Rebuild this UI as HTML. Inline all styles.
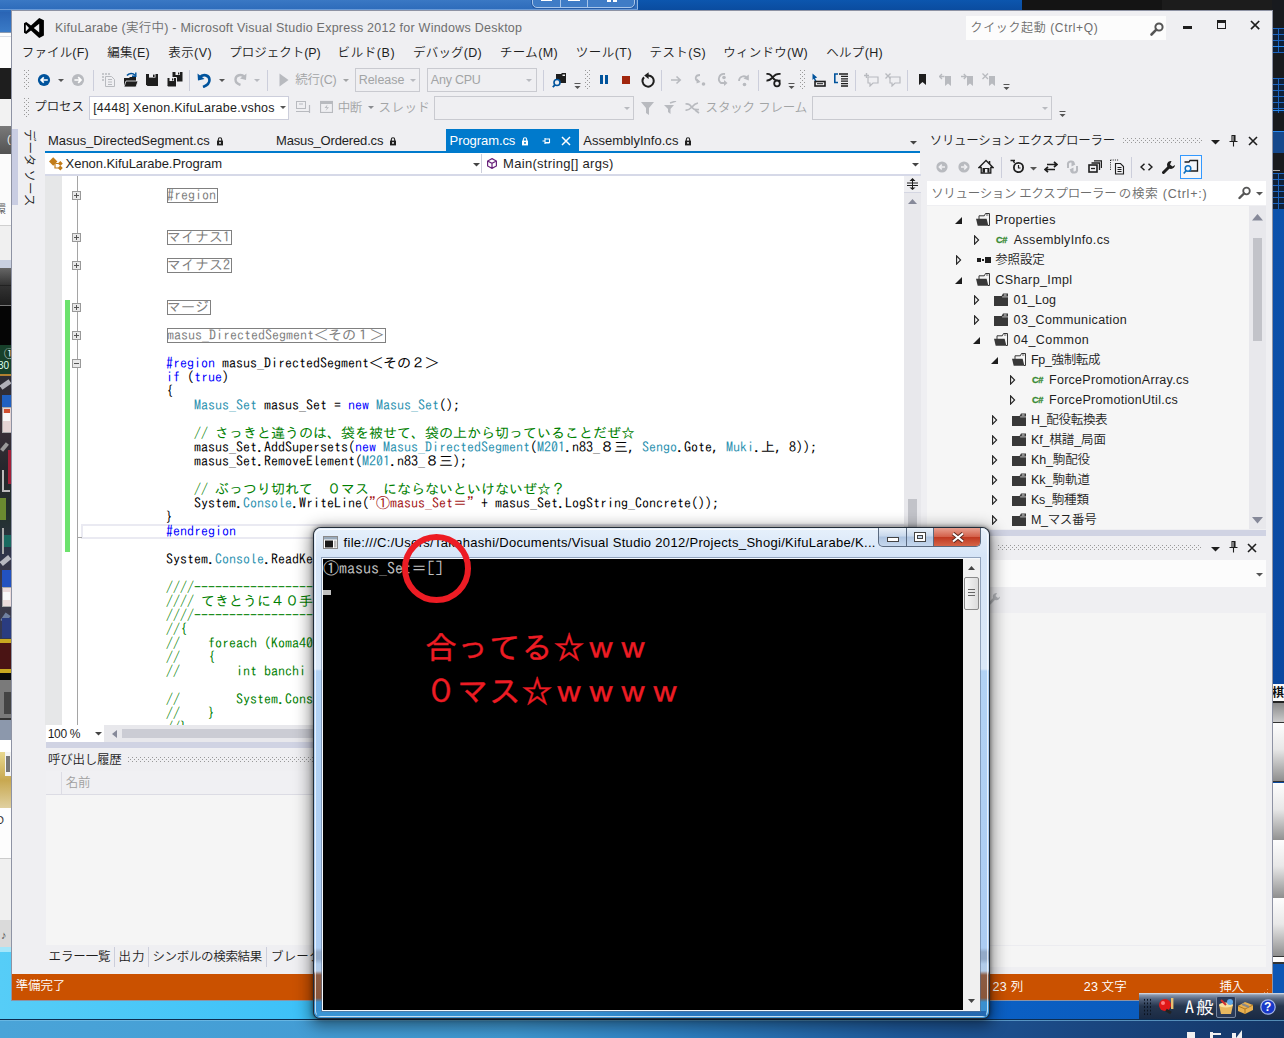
<!DOCTYPE html>
<html lang="ja"><head><meta charset="utf-8"><title>KifuLarabe - Microsoft Visual Studio</title><style>
html,body{margin:0;padding:0}
body{width:1284px;height:1038px;overflow:hidden;position:relative;background:#0a4aa0}
#p{position:absolute;left:0;top:0;width:1284px;height:1038px;overflow:hidden}
#p div,#p span,#p svg{position:absolute;box-sizing:content-box}
#p span{white-space:pre}
.u{font-family:"Liberation Sans","Noto Sans CJK JP",sans-serif;font-weight:350}
.c{font-family:"IPAGothic","Liberation Mono",monospace;font-size:14px;line-height:14px;height:14px;color:#000}
.c i{font-style:normal}
.q{display:inline-block;position:static;width:7px;overflow:hidden;font-weight:normal;vertical-align:top;height:14px}
.k{color:#00f}.t{color:#2b91af}.g{color:#008000}.s{color:#a31515}
</style></head><body><div id="p">
<svg width="0" height="0" style="left:0;top:0"><defs><pattern id="gp" width="4" height="4" patternUnits="userSpaceOnUse"><rect width="1" height="1" fill="#999"/><rect x="2" y="2" width="1" height="1" fill="#999"/></pattern></defs></svg>
<div style="left:0px;top:0px;width:1022px;height:12px;background:linear-gradient(#2c6cbc,#0d4da2);"></div>
<div style="left:0px;top:0px;width:640px;height:12px;background:linear-gradient(#3a78c4,#2a68b8);"></div>
<div style="left:638px;top:0px;width:384px;height:12px;background:linear-gradient(#0c56ae,#0a4a9c);"></div>
<div style="left:1022px;top:0px;width:262px;height:12px;background:#1c1c1c;"></div>
<div style="left:1022px;top:0px;width:140px;height:10px;background:#141414;"></div>
<div style="left:532px;top:-6px;width:101px;height:12px;border:1px solid #a8c6ea;border-radius:0 0 5px 5px;background:#3f7cc6;box-shadow:0 0 0 1px #245aa6"></div>
<div style="left:560px;top:-6px;width:1px;height:13px;background:#a8c6ea;"></div>
<div style="left:587px;top:-6px;width:1px;height:13px;background:#a8c6ea;"></div>
<div style="left:541px;top:0px;width:11px;height:1px;background:#fff;"></div>
<div style="left:568px;top:0px;width:12px;height:1px;background:#fff;"></div>
<div style="left:607px;top:0px;width:4px;height:2px;background:#fff;"></div>
<div style="left:613px;top:0px;width:4px;height:2px;background:#fff;"></div>
<div style="left:637px;top:0px;width:1px;height:10px;background:#8fb4e0;"></div>
<div style="left:0px;top:9px;width:638px;height:1px;background:#6a9ad6;"></div>
<div style="left:0px;top:12px;width:12px;height:21px;background:linear-gradient(#2a64b4,#3b7cc8);"></div>
<div style="left:0px;top:32px;width:12px;height:36px;background:#fdfdfd;"></div>
<div style="left:0px;top:32px;width:12px;height:1px;background:#8a9ab0;"></div>
<div style="left:0px;top:36px;width:12px;height:1px;background:#d8dce4;"></div>
<div style="left:0px;top:68px;width:12px;height:31px;background:#1e1e1e;"></div>
<div style="left:0px;top:99px;width:12px;height:27px;background:#f2f2f2;"></div>
<div style="left:0px;top:126px;width:12px;height:28px;background:linear-gradient(#7a7a7a,#525252);"></div>
<span id="t0" class="u" style="left:7px;top:132px;height:14px;line-height:14px;font-size:11px;color:#eee;">(</span>
<div style="left:0px;top:154px;width:12px;height:72px;background:#fbfbfb;"></div>
<span id="t1" class="u" style="left:-5px;top:202px;height:14px;line-height:14px;font-size:11px;color:#555;">環</span>
<div style="left:0px;top:225px;width:12px;height:1px;background:#d0d0d0;"></div>
<div style="left:0px;top:226px;width:12px;height:34px;background:#f0f0f0;"></div>
<div style="left:0px;top:260px;width:12px;height:8px;background:#c9d0e0;"></div>
<div style="left:0px;top:268px;width:12px;height:38px;background:linear-gradient(#666,#333 45%,#1c1c1c);"></div>
<div style="left:0px;top:285px;width:12px;height:1px;background:#222;"></div>
<div style="left:0px;top:305px;width:12px;height:1px;background:#777;"></div>
<div style="left:0px;top:306px;width:12px;height:39px;background:#050505;"></div>
<div style="left:0px;top:345px;width:12px;height:30px;background:#17402a;"></div>
<span id="t2" class="u" style="left:4px;top:348px;height:12px;line-height:12px;font-size:11px;color:#fff;">①</span>
<span id="t3" class="u" style="left:-2px;top:360px;height:12px;line-height:12px;font-size:10px;color:#dfe;">30</span>
<div style="left:0px;top:374px;width:12px;height:2px;background:#b08030;"></div>
<div style="left:0px;top:376px;width:12px;height:263px;background:linear-gradient(#2c2c34,#3a3038 20%,#26262c 35%,#22302c 52%,#30344a 68%,#403a44 80%,#343850);"></div>
<div style="left:0px;top:382px;width:11px;height:5px;background:#b0b0b8;transform:rotate(-35deg)"></div>
<div style="left:2px;top:395px;width:9px;height:14px;background:#2060c0;"></div>
<div style="left:2px;top:407px;width:9px;height:24px;background:#e4d4d4;border:1px solid #aaa"></div>
<div style="left:3px;top:413px;width:7px;height:8px;background:#f8f8f8;"></div>
<div style="left:4px;top:409px;width:6px;height:4px;background:#d05030;"></div>
<div style="left:8px;top:450px;width:4px;height:34px;background:#a02038;"></div>
<div style="left:0px;top:445px;width:9px;height:4px;background:#999;transform:rotate(-50deg)"></div>
<div style="left:2px;top:470px;width:2px;height:22px;background:#bbb;"></div>
<div style="left:2px;top:490px;width:8px;height:2px;background:#bbb;"></div>
<div style="left:0px;top:498px;width:6px;height:22px;background:#6a8a30;"></div>
<div style="left:3px;top:535px;width:8px;height:12px;background:#1a6a60;"></div>
<div style="left:2px;top:528px;width:2px;height:26px;background:#aaa;"></div>
<div style="left:0px;top:558px;width:11px;height:5px;background:#b8b8c0;transform:rotate(-40deg)"></div>
<div style="left:2px;top:570px;width:9px;height:18px;background:#2252c0;"></div>
<div style="left:2px;top:587px;width:9px;height:18px;background:#ecdcdc;border:1px solid #aaa"></div>
<div style="left:3px;top:592px;width:7px;height:8px;background:#fafafa;"></div>
<div style="left:1px;top:615px;width:9px;height:6px;background:#7080a0;transform:rotate(-55deg)"></div>
<div style="left:2px;top:618px;width:9px;height:20px;background:#2a3c80;"></div>
<div style="left:0px;top:639px;width:12px;height:4px;background:#c8a820;"></div>
<div style="left:0px;top:643px;width:12px;height:26px;background:#4a1414;"></div>
<div style="left:0px;top:669px;width:12px;height:4px;background:#c8a820;"></div>
<div style="left:0px;top:673px;width:12px;height:7px;background:#0a0a0a;"></div>
<div style="left:0px;top:680px;width:12px;height:38px;background:#7a7a7a;"></div>
<div style="left:4px;top:692px;width:8px;height:22px;background:#444;"></div>
<div style="left:0px;top:718px;width:12px;height:2px;background:#333;"></div>
<div style="left:0px;top:720px;width:12px;height:20px;background:#8c98ac;"></div>
<div style="left:0px;top:740px;width:12px;height:12px;background:#fff;"></div>
<div style="left:0px;top:752px;width:12px;height:56px;background:linear-gradient(#e8d890,#c8a850 50%,#e0d0a0);"></div>
<div style="left:5px;top:752px;width:7px;height:24px;background:#f4f4f4;"></div>
<div style="left:6px;top:756px;width:4px;height:16px;background:#777;"></div>
<div style="left:0px;top:808px;width:12px;height:51px;background:#fdfdfd;"></div>
<span id="t4" class="u" style="left:-4px;top:813px;height:14px;line-height:14px;font-size:11px;color:#333;">D</span>
<div style="left:0px;top:858px;width:12px;height:1px;background:#ccc;"></div>
<div style="left:0px;top:859px;width:12px;height:61px;background:#f0f0f0;"></div>
<div style="left:0px;top:920px;width:12px;height:28px;background:#dadada;"></div>
<span id="t5" class="u" style="left:1px;top:927px;height:16px;line-height:16px;font-size:11px;color:#555;">♪</span>
<div style="left:0px;top:947px;width:1284px;height:73px;background:linear-gradient(90deg,#56cdf7 0%,#3cc0f8 25%,#27b0f5 48%,#1a86e0 52%,#0b62c8 70%,#0a58b8 100%);"></div>
<div style="left:0px;top:947px;width:12px;height:5px;background:#a4e6fa;"></div>
<div style="left:0px;top:1019px;width:1284px;height:1px;background:#0c2c50;"></div>
<div style="left:0px;top:1020px;width:1284px;height:18px;background:linear-gradient(90deg,#4aa4d8 0%,#3f98d2 40%,#2f82c4 52%,#1f5a9c 70%,#1a4680 85%,#143666 100%);"></div>
<div style="left:0px;top:1020px;width:1284px;height:1px;background:#7fc4ea;opacity:.6;"></div>
<div style="left:1272px;top:0px;width:12px;height:210px;background:#181a1e;"></div>
<div style="left:1272px;top:28px;width:12px;height:25px;background:#0e2038;background-image:linear-gradient(#1c64c0 1px,transparent 1px),linear-gradient(90deg,#1c64c0 1px,transparent 1px);background-size:6px 6px"></div>
<div style="left:1272px;top:78px;width:12px;height:35px;background:#0e2038;background-image:linear-gradient(#1c64c0 1px,transparent 1px),linear-gradient(90deg,#1c64c0 1px,transparent 1px);background-size:6px 6px"></div>
<div style="left:1272px;top:173px;width:12px;height:36px;background:#0e2038;background-image:linear-gradient(#1c64c0 1px,transparent 1px),linear-gradient(90deg,#1c64c0 1px,transparent 1px);background-size:6px 6px"></div>
<div style="left:1272px;top:46px;width:12px;height:1px;background:#2a8af0;"></div>
<div style="left:1272px;top:110px;width:12px;height:1px;background:#2a8af0;"></div>
<div style="left:1272px;top:131px;width:12px;height:22px;background:#15488c;"></div>
<div style="left:1272px;top:131px;width:12px;height:1px;background:#2a8af0;"></div>
<div style="left:1272px;top:170px;width:8px;height:1px;background:#aaa;"></div>
<div style="left:1272px;top:209px;width:12px;height:476px;background:linear-gradient(#0c52ac,#0a48a0);"></div>
<div style="left:1272px;top:684px;width:12px;height:17px;background:#fafafa;"></div>
<span id="t6" class="u" style="left:1272px;top:685.5px;height:14px;line-height:14px;font-size:12px;color:#111;font-weight:bold;">棋</span>
<div style="left:1272px;top:701px;width:12px;height:2px;background:#222;"></div>
<div style="left:1272px;top:703px;width:12px;height:20px;background:linear-gradient(#8a8a8a,#cfcfcf);"></div>
<div style="left:1272px;top:722px;width:12px;height:1px;background:#333;"></div>
<div style="left:1272px;top:723px;width:12px;height:58px;background:linear-gradient(#fdfdfd,#e8e8e8 45%,#8e8e8e);"></div>
<div style="left:1272px;top:781px;width:12px;height:1px;background:#333;"></div>
<div style="left:1272px;top:783px;width:12px;height:58px;background:linear-gradient(#fdfdfd,#e8e8e8 45%,#8e8e8e);"></div>
<div style="left:1272px;top:841px;width:12px;height:1px;background:#333;"></div>
<div style="left:1272px;top:840px;width:12px;height:58px;background:linear-gradient(#fdfdfd,#e8e8e8 45%,#8e8e8e);"></div>
<div style="left:1272px;top:898px;width:12px;height:1px;background:#333;"></div>
<div style="left:1272px;top:898px;width:12px;height:58px;background:linear-gradient(#fdfdfd,#e8e8e8 45%,#8e8e8e);"></div>
<div style="left:1272px;top:956px;width:12px;height:1px;background:#333;"></div>
<div style="left:1272px;top:957px;width:12px;height:5px;background:#fdfdfd;"></div>
<div style="left:1272px;top:962px;width:12px;height:2px;background:#333;"></div>
<div style="left:1272px;top:964px;width:12px;height:31px;background:#0c56b4;"></div>
<div style="left:12px;top:11px;width:1260px;height:989px;background:#efeff2;box-shadow:0 0 0 1px #8e93a4"></div>
<svg style="left:24px;top:18px;" width="20" height="20" viewBox="0 0 20 20"><path fill="#000" fill-rule="evenodd" d="M15.2 0 L19.9 2.3 V17.6 L15.2 20 L7 12.4 L2.2 16 L0 14.7 V5.3 L2.2 4 L7 7.6 Z M15.2 5.7 L9.8 10 L15.2 14.4 Z M1.8 6.6 L5 10 L1.8 13.4 Z"/></svg>
<span id="t7" class="u" style="left:55px;top:18.5px;height:18px;line-height:18px;font-size:12.5px;color:#6e6e6e;letter-spacing:0.24px">KifuLarabe (実行中) - Microsoft Visual Studio Express 2012 for Windows Desktop</span>
<div style="left:966px;top:16px;width:200px;height:24px;background:#fcfcfc;"></div>
<span id="t8" class="u" style="left:970.5px;top:18.5px;height:18px;line-height:18px;font-size:12px;color:#6d6d6d;letter-spacing:0.63px">クイック起動 (Ctrl+Q)</span>
<svg style="left:1149px;top:20.5px;" width="16" height="16" viewBox="0 0 16 16"><circle cx="10" cy="6" r="3.6" fill="none" stroke="#555" stroke-width="2"/><path d="M7.3 8.7 L2.5 13.5" stroke="#555" stroke-width="2.6" stroke-linecap="round"/></svg>
<div style="left:1183px;top:26px;width:9px;height:3px;background:#1e1e1e;"></div>
<div style="left:1217px;top:20px;width:7px;height:5px;border:1px solid #1e1e1e;border-top-width:3px"></div>
<svg style="left:1249px;top:19px;" width="12" height="12" viewBox="0 0 12 12"><path d="M2 2 L10.2 10.2 M10.2 2 L2 10.2" stroke="#1e1e1e" stroke-width="1.7"/></svg>
<span id="t9" class="u" style="left:21.73px;top:43.5px;height:18px;line-height:18px;font-size:12.5px;color:#1e1e1e;letter-spacing:0.16px">ファイル(F)</span>
<span id="t10" class="u" style="left:107.27px;top:43.5px;height:18px;line-height:18px;font-size:12.5px;color:#1e1e1e;letter-spacing:0.16px">編集(E)</span>
<span id="t11" class="u" style="left:168.28px;top:43.5px;height:18px;line-height:18px;font-size:12.5px;color:#1e1e1e;letter-spacing:0.42px">表示(V)</span>
<span id="t12" class="u" style="left:229.33px;top:43.5px;height:18px;line-height:18px;font-size:12.5px;color:#1e1e1e;letter-spacing:-0.03px">プロジェクト(P)</span>
<span id="t13" class="u" style="left:337.54px;top:43.5px;height:18px;line-height:18px;font-size:12.5px;color:#1e1e1e;letter-spacing:0.60px">ビルド(B)</span>
<span id="t14" class="u" style="left:412.93px;top:43.5px;height:18px;line-height:18px;font-size:12.5px;color:#1e1e1e;letter-spacing:0.23px">デバッグ(D)</span>
<span id="t15" class="u" style="left:499.88px;top:43.5px;height:18px;line-height:18px;font-size:12.5px;color:#1e1e1e;letter-spacing:0.39px">チーム(M)</span>
<span id="t16" class="u" style="left:575.7px;top:43.5px;height:18px;line-height:18px;font-size:12.5px;color:#1e1e1e;letter-spacing:0.49px">ツール(T)</span>
<span id="t17" class="u" style="left:649.59px;top:43.5px;height:18px;line-height:18px;font-size:12.5px;color:#1e1e1e;letter-spacing:0.39px">テスト(S)</span>
<span id="t18" class="u" style="left:723.29px;top:43.5px;height:18px;line-height:18px;font-size:12.5px;color:#1e1e1e;letter-spacing:0.25px">ウィンドウ(W)</span>
<span id="t19" class="u" style="left:826.16px;top:43.5px;height:18px;line-height:18px;font-size:12.5px;color:#1e1e1e;letter-spacing:0.33px">ヘルプ(H)</span>
<svg style="left:24px;top:70px;" width="5" height="19" viewBox="0 0 5 19"><rect width="5" height="19" fill="url(#gp)"/></svg>
<svg style="left:37px;top:73px;" width="14" height="14" viewBox="0 0 14 14"><circle cx="7" cy="7" r="6.1" fill="#00539c"/><path d="M10.8 7 H4.4 M6.8 4.3 L4.1 7 L6.8 9.7" stroke="#fff" stroke-width="1.7" fill="none"/></svg>
<svg style="left:58px;top:79px;" width="6" height="3" viewBox="0 0 6 3"><path d="M0 0 H6 L3 3 Z" fill="#555"/></svg>
<svg style="left:71px;top:73px;" width="14" height="14" viewBox="0 0 14 14"><circle cx="7" cy="7" r="6.1" fill="#b8babf"/><path d="M3.4 7 H9.8 M7.2 4.2 L10 7 L7.2 9.8" stroke="#fff" stroke-width="1.7" fill="none"/></svg>
<div style="left:93px;top:70px;width:1px;height:21px;background:#cccedb;"></div>
<svg style="left:101px;top:73px;" width="15" height="15" viewBox="0 0 15 15"><path d="M4.5 3.5 H10.5 L13.5 6.5 V13.5 H4.5 Z M7 6.5 H11 M7 9 H11 M7 11.5 H11" fill="none" stroke="#b8babf" stroke-width="1"/><path d="M1 1 h2 M1 4 h2 M1 7 h2 M4 1 h2 M7 1 h2" stroke="#b8babf" stroke-width="1.4"/></svg>
<svg style="left:123px;top:72px;" width="15" height="16" viewBox="0 0 15 16"><path d="M1 6 H6 L7 5 H13 V15 H1 Z" fill="#1e1e1e"/><path d="M3 9 H15 L13 15 H1 Z" fill="#1e1e1e" stroke="#efeff2" stroke-width=".8"/><path d="M4 3.5 C6 0.8 10 0.8 12 3.2" stroke="#00539c" stroke-width="1.6" fill="none"/><path d="M12.8 0.5 V4.3 H9" fill="none" stroke="#00539c" stroke-width="1.4"/></svg>
<svg style="left:146px;top:74px;" width="12" height="12" viewBox="0 0 12 12"><path d="M0 0 H12 V12 H1.5 L0 10.5 Z" fill="#1e1e1e"/><rect x="3" y="0" width="6.5" height="3.6" fill="#efeff2"/><rect x="7" y="0.6" width="1.6" height="2.4" fill="#1e1e1e"/></svg>
<svg style="left:167px;top:72px;" width="16" height="15" viewBox="0 0 16 15"><path d="M5.5 0 H15.5 V9.5 H7 L5.5 8 Z" fill="#1e1e1e"/><rect x="8.5" y="0" width="4.5" height="3" fill="#efeff2"/><rect x="11" y="0.5" width="1.3" height="2" fill="#1e1e1e"/><path d="M0 5.5 H9.5 V15 H1.2 L0 13.8 Z" fill="#1e1e1e" stroke="#efeff2" stroke-width="1"/><rect x="2.5" y="6" width="4.5" height="3" fill="#efeff2"/><rect x="5" y="6.4" width="1.3" height="2.1" fill="#1e1e1e"/></svg>
<div style="left:189px;top:70px;width:1px;height:21px;background:#cccedb;"></div>
<svg style="left:197px;top:72px;" width="15" height="16" viewBox="0 0 15 16"><path d="M2.5 5.5 C6 1.5 12.5 3 12.5 8 C12.5 11 10 13.5 6 15" fill="none" stroke="#00539c" stroke-width="2.6"/><path d="M0.5 1.5 L1 8.5 L7.5 7 Z" fill="#00539c"/></svg>
<svg style="left:219px;top:79px;" width="6" height="3" viewBox="0 0 6 3"><path d="M0 0 H6 L3 3 Z" fill="#555"/></svg>
<svg style="left:233px;top:72px;" width="14" height="14" viewBox="0 0 14 14"><path d="M11.5 5 C8.5 1.5 2.5 3 2.5 7.5 C2.5 10 4.5 12 7.5 13" fill="none" stroke="#b8babf" stroke-width="2.4"/><path d="M13.5 1.5 L13 8 L7 6.5 Z" fill="#b8babf"/></svg>
<svg style="left:254px;top:79px;" width="6" height="3" viewBox="0 0 6 3"><path d="M0 0 H6 L3 3 Z" fill="#b8babf"/></svg>
<div style="left:267px;top:70px;width:1px;height:21px;background:#cccedb;"></div>
<svg style="left:279px;top:73px;" width="10" height="14" viewBox="0 0 10 14"><path d="M0.5 0.5 L9.5 7 L0.5 13.5 Z" fill="#b8babf"/></svg>
<span id="t20" class="u" style="left:295.27px;top:71px;height:18px;line-height:18px;font-size:12.5px;color:#a2a4a5;letter-spacing:-0.24px">続行(C)</span>
<svg style="left:343px;top:79px;" width="6" height="3" viewBox="0 0 6 3"><path d="M0 0 H6 L3 3 Z" fill="#a2a4a5"/></svg>
<div style="left:355px;top:68px;width:63px;height:22px;border:1px solid #c9cad0"></div>
<span id="t21" class="u" style="left:358.64px;top:71px;height:18px;line-height:18px;font-size:12.5px;color:#a2a4a5;letter-spacing:-0.00px">Release</span>
<svg style="left:410px;top:79px;" width="6" height="3" viewBox="0 0 6 3"><path d="M0 0 H6 L3 3 Z" fill="#b8babf"/></svg>
<div style="left:427px;top:68px;width:108px;height:22px;border:1px solid #c9cad0"></div>
<span id="t22" class="u" style="left:430.86px;top:71px;height:18px;line-height:18px;font-size:12.5px;color:#a2a4a5;letter-spacing:-0.24px">Any CPU</span>
<svg style="left:526px;top:79px;" width="6" height="3" viewBox="0 0 6 3"><path d="M0 0 H6 L3 3 Z" fill="#b8babf"/></svg>
<div style="left:543px;top:70px;width:1px;height:21px;background:#cccedb;"></div>
<svg style="left:552px;top:72px;" width="15" height="16" viewBox="0 0 15 16"><path d="M4 2 H9 L10 1 H14 V11 H4 Z" fill="#1e1e1e"/><rect x="10.5" y="2.5" width="2.5" height="1.5" fill="#efeff2"/><circle cx="5" cy="10.5" r="3" fill="#efeff2" stroke="#00539c" stroke-width="1.6"/><path d="M3 12.8 L0.8 15.2" stroke="#00539c" stroke-width="1.8"/></svg>
<svg style="left:574px;top:83px;" width="8" height="7" viewBox="0 0 8 7"><path d="M0.5 0.5 H6.5" stroke="#555" stroke-width="1"/><path d="M0.5 3 H6.5 L3.5 6 Z" fill="#555"/></svg>
<svg style="left:585px;top:70px;" width="5" height="19" viewBox="0 0 5 19"><rect width="5" height="19" fill="url(#gp)"/></svg>
<div style="left:600px;top:75px;width:3px;height:9px;background:#00539c;"></div>
<div style="left:605px;top:75px;width:3px;height:9px;background:#00539c;"></div>
<div style="left:622px;top:76px;width:8px;height:8px;background:#a1260d;"></div>
<svg style="left:640px;top:72px;" width="15" height="16" viewBox="0 0 15 16"><path d="M4 5.2 A5.6 5.6 0 1 0 8 3.4" fill="none" stroke="#1e1e1e" stroke-width="2"/><path d="M8.6 0.2 L4.2 3.6 L8.6 7 Z" fill="#1e1e1e"/></svg>
<div style="left:661px;top:70px;width:1px;height:21px;background:#cccedb;"></div>
<svg style="left:671px;top:75px;" width="11" height="10" viewBox="0 0 11 10"><path d="M0 5 H9 M5.5 1.5 L9.2 5 L5.5 8.5" stroke="#b8babf" stroke-width="1.6" fill="none"/></svg>
<svg style="left:692px;top:73px;" width="14" height="14" viewBox="0 0 14 14"><path d="M8 2 C3 2 2 7 7 8.5" fill="none" stroke="#b8babf" stroke-width="1.8"/><path d="M5 5.5 L8.5 9 L4.5 10.5 Z" fill="#b8babf"/><circle cx="11.5" cy="11" r="1.8" fill="#b8babf"/></svg>
<svg style="left:716px;top:72px;" width="13" height="15" viewBox="0 0 13 15"><path d="M9 2 C3 1 1 8 5 11 L9 11" fill="none" stroke="#b8babf" stroke-width="1.8"/><path d="M8 8 L11.5 11 L8 14 Z" fill="#b8babf"/><circle cx="8" cy="5.5" r="1.8" fill="#b8babf"/></svg>
<svg style="left:737px;top:73px;" width="13" height="14" viewBox="0 0 13 14"><path d="M2 8 C2 3 8 2 10 5" fill="none" stroke="#b8babf" stroke-width="1.8"/><path d="M11.8 1.5 L11.8 7.5 L6.5 5.5 Z" fill="#b8babf"/><circle cx="7.5" cy="11.5" r="1.8" fill="#b8babf"/></svg>
<div style="left:758px;top:70px;width:1px;height:21px;background:#cccedb;"></div>
<svg style="left:766px;top:72px;" width="16" height="16" viewBox="0 0 16 16"><path d="M0.5 2 C4 1.5 5 3 7 6 C9 9 12 9 14.5 8.5 M0.5 8.5 C3 9 5 7 7 5 C9 2.5 11 1.5 14.5 2" fill="none" stroke="#1e1e1e" stroke-width="1.9"/><circle cx="11" cy="11.5" r="2.8" fill="#efeff2" stroke="#1e1e1e" stroke-width="1.8"/></svg>
<svg style="left:788px;top:83px;" width="8" height="7" viewBox="0 0 8 7"><path d="M0.5 0.5 H6.5" stroke="#555" stroke-width="1"/><path d="M0.5 3 H6.5 L3.5 6 Z" fill="#555"/></svg>
<svg style="left:800px;top:70px;" width="5" height="19" viewBox="0 0 5 19"><rect width="5" height="19" fill="url(#gp)"/></svg>
<svg style="left:812px;top:73px;" width="14" height="14" viewBox="0 0 14 14"><path d="M0.5 0.5 L5.2 4.5 L3 5.2 L4.5 8 L3.2 8.6 L1.8 5.8 L0.5 7 Z" fill="#00539c"/><rect x="3" y="8.5" width="10" height="4.5" fill="none" stroke="#1e1e1e" stroke-width="1.6"/><path d="M5 10.7 H11" stroke="#1e1e1e" stroke-width="1"/></svg>
<svg style="left:834px;top:73px;" width="14" height="14" viewBox="0 0 14 14"><path d="M4 1 H0.8 V9.5 H4" fill="none" stroke="#00539c" stroke-width="1.6"/><path d="M5 1 H14 M7 3.4 H14 M7 5.8 H14 M7 8.2 H14 M7 10.6 H14 M7 13 H14" stroke="#1e1e1e" stroke-width="1.3"/></svg>
<div style="left:855px;top:70px;width:1px;height:21px;background:#cccedb;"></div>
<svg style="left:864px;top:73px;" width="15" height="14" viewBox="0 0 15 14"><path d="M4 4 H14 V10 H9 L6 13 V10 H4 Z" fill="none" stroke="#b8babf" stroke-width="1.2"/><path d="M0 2.5 H5 M2.5 0 V5" stroke="#b8babf" stroke-width="1.4"/></svg>
<svg style="left:885px;top:73px;" width="16" height="14" viewBox="0 0 16 14"><path d="M5 4 H15 V10 H10 L7 13 V10 H5 Z" fill="none" stroke="#b8babf" stroke-width="1.2"/><path d="M0.5 0.5 L5.5 5.5 M5.5 0.5 L0.5 5.5" stroke="#b8babf" stroke-width="1.4"/></svg>
<div style="left:907px;top:70px;width:1px;height:21px;background:#cccedb;"></div>
<svg style="left:919px;top:74px;" width="7" height="11" viewBox="0 0 7 11"><path d="M0 0 H7 V11 L3.5 8 L0 11 Z" fill="#1e1e1e"/></svg>
<svg style="left:939px;top:73px;" width="13" height="13" viewBox="0 0 13 13"><path d="M6 3 H12 V13 L9 10.5 L6 13 Z" fill="#b8babf"/><path d="M0.5 3.5 H5.5 M3 1 L0.5 3.5 L3 6" stroke="#b8babf" stroke-width="1.3" fill="none"/></svg>
<svg style="left:961px;top:73px;" width="13" height="13" viewBox="0 0 13 13"><path d="M6 3 H12 V13 L9 10.5 L6 13 Z" fill="#b8babf"/><path d="M0 3.5 H5 M2.8 1 L5.3 3.5 L2.8 6" stroke="#b8babf" stroke-width="1.3" fill="none"/></svg>
<svg style="left:982px;top:73px;" width="14" height="13" viewBox="0 0 14 13"><path d="M7 3 H13 V13 L10 10.5 L7 13 Z" fill="#b8babf"/><path d="M0.5 0.5 L6 6 M6 0.5 L0.5 6" stroke="#b8babf" stroke-width="1.3"/></svg>
<svg style="left:1003px;top:84px;" width="8" height="7" viewBox="0 0 8 7"><path d="M0.5 0.5 H6.5" stroke="#555" stroke-width="1"/><path d="M0.5 3 H6.5 L3.5 6 Z" fill="#555"/></svg>
<svg style="left:24px;top:98px;" width="5" height="19" viewBox="0 0 5 19"><rect width="5" height="19" fill="url(#gp)"/></svg>
<span id="t23" class="u" style="left:34.32px;top:98px;height:18px;line-height:18px;font-size:12.5px;color:#1e1e1e;letter-spacing:-0.11px">プロセス</span>
<div style="left:89px;top:96px;width:198px;height:22px;border:1px solid #cccedb;background:#fff"></div>
<span id="t24" class="u" style="left:93.15px;top:98.5px;height:18px;line-height:18px;font-size:12.5px;color:#1e1e1e;letter-spacing:0.25px">[4448] Xenon.KifuLarabe.vshos</span>
<svg style="left:280px;top:106px;" width="6" height="3" viewBox="0 0 6 3"><path d="M0 0 H6 L3 3 Z" fill="#555"/></svg>
<svg style="left:296px;top:100px;" width="15" height="14" viewBox="0 0 15 14"><rect x="0.5" y="1.5" width="9" height="7" fill="none" stroke="#b8babf"/><path d="M3 4 H7 M0 11.5 H13 M13.5 5 V13" stroke="#b8babf" stroke-width="1.2" fill="none"/></svg>
<svg style="left:320px;top:100px;" width="13" height="13" viewBox="0 0 13 13"><rect x="0.5" y="1.5" width="12" height="11" fill="none" stroke="#b8babf" stroke-width="1.2"/><path d="M0 3 H13" stroke="#b8babf" stroke-width="2"/><path d="M7.5 4.5 L4.5 8 H7 L5.5 11 L9 7.3 H6.7 Z" fill="#b8babf"/></svg>
<span id="t25" class="u" style="left:337.87px;top:98.7px;height:18px;line-height:18px;font-size:12.5px;color:#a2a4a5;letter-spacing:-0.51px">中断</span>
<svg style="left:368px;top:106px;" width="6" height="3" viewBox="0 0 6 3"><path d="M0 0 H6 L3 3 Z" fill="#8a8c90"/></svg>
<span id="t26" class="u" style="left:378.62px;top:98.7px;height:18px;line-height:18px;font-size:12.5px;color:#a2a4a5;letter-spacing:0.42px">スレッド</span>
<div style="left:434px;top:96px;width:198px;height:22px;border:1px solid #c9cad0"></div>
<svg style="left:624px;top:107px;" width="6" height="3" viewBox="0 0 6 3"><path d="M0 0 H6 L3 3 Z" fill="#b8babf"/></svg>
<svg style="left:641px;top:102px;" width="14" height="14" viewBox="0 0 14 14"><path d="M0 0 H13 L8 6 V13 L5 11 V6 Z" fill="#b8babf"/></svg>
<svg style="left:664px;top:101px;" width="13" height="14" viewBox="0 0 13 14"><path d="M0 4 H10 L6.5 8 V13 L4 11 V8 Z" fill="#b8babf"/><path d="M6 2 L12 0" stroke="#b8babf" stroke-width="1.5"/></svg>
<svg style="left:685px;top:102px;" width="15" height="12" viewBox="0 0 15 12"><path d="M0.5 2 C4 1.5 5 3 7 5.5 C9 8 11 8 14 7.5 M0.5 8 C3 8.5 5 7 7 5 C9 2.5 10 1.5 13 1" fill="none" stroke="#b8babf" stroke-width="1.7"/><path d="M10 8 L14 11" stroke="#b8babf" stroke-width="1.6"/></svg>
<span id="t27" class="u" style="left:705.62px;top:98.7px;height:18px;line-height:18px;font-size:12.5px;color:#a2a4a5;letter-spacing:-0.18px">スタック フレーム</span>
<div style="left:812px;top:96px;width:238px;height:22px;border:1px solid #c9cad0"></div>
<svg style="left:1042px;top:107px;" width="6" height="3" viewBox="0 0 6 3"><path d="M0 0 H6 L3 3 Z" fill="#b8babf"/></svg>
<svg style="left:1059px;top:111px;" width="8" height="7" viewBox="0 0 8 7"><path d="M0.5 0.5 H6.5" stroke="#555" stroke-width="1"/><path d="M0.5 3 H6.5 L3.5 6 Z" fill="#555"/></svg>
<div style="left:12px;top:129px;width:6px;height:76px;background:#c9cde2;"></div>
<span class="u" style="left:20px;top:129px;width:18px;height:80px;line-height:18px;font-size:12.5px;color:#1e1e1e;writing-mode:vertical-rl;text-orientation:sideways;letter-spacing:-0.1px">データ ソース</span>
<span id="t28" class="u" style="left:48px;top:131.5px;height:18px;line-height:18px;font-size:13px;color:#1e1e1e;letter-spacing:-0.04px">Masus_DirectedSegment.cs</span>
<svg style="left:217px;top:136.5px;" width="6" height="9" viewBox="0 0 6 9"><rect x="0" y="3.6" width="6" height="4.8" fill="#1e1e1e"/><rect x="2.2" y="5" width="1.6" height="1.8" fill="#efeff2"/><path d="M1.3 4 V2.4 a1.7 1.7 0 0 1 3.4 0 V4" fill="none" stroke="#1e1e1e" stroke-width="1.1"/></svg>
<span id="t29" class="u" style="left:276px;top:131.5px;height:18px;line-height:18px;font-size:13px;color:#1e1e1e;letter-spacing:-0.16px">Masus_Ordered.cs</span>
<svg style="left:390px;top:136.5px;" width="6" height="9" viewBox="0 0 6 9"><rect x="0" y="3.6" width="6" height="4.8" fill="#1e1e1e"/><rect x="2.2" y="5" width="1.6" height="1.8" fill="#efeff2"/><path d="M1.3 4 V2.4 a1.7 1.7 0 0 1 3.4 0 V4" fill="none" stroke="#1e1e1e" stroke-width="1.1"/></svg>
<div style="left:446px;top:129px;width:133px;height:22px;background:#007acc;"></div>
<span id="t30" class="u" style="left:449.54px;top:131.5px;height:18px;line-height:18px;font-size:13px;color:#fff;letter-spacing:-0.07px">Program.cs</span>
<svg style="left:522px;top:136.5px;" width="6" height="9" viewBox="0 0 6 9"><rect x="0" y="3.6" width="6" height="4.8" fill="#fff"/><rect x="2.2" y="5" width="1.6" height="1.8" fill="#007acc"/><path d="M1.3 4 V2.4 a1.7 1.7 0 0 1 3.4 0 V4" fill="none" stroke="#fff" stroke-width="1.1"/></svg>
<svg style="left:542px;top:137px;" width="9" height="8" viewBox="0 0 9 8"><path d="M0.5 4 H3 M3 1 V7 M3 2 H7.5 V5.5 H3 M3 6 H7.5" stroke="#fff" stroke-width="1.1" fill="none"/></svg>
<svg style="left:561px;top:136px;" width="10" height="10" viewBox="0 0 10 10"><path d="M1 1 L9 9 M9 1 L1 9" stroke="#fff" stroke-width="1.5"/></svg>
<span id="t31" class="u" style="left:583.34px;top:131.5px;height:18px;line-height:18px;font-size:13px;color:#1e1e1e;letter-spacing:0.03px">AssemblyInfo.cs</span>
<svg style="left:685px;top:136.5px;" width="6" height="9" viewBox="0 0 6 9"><rect x="0" y="3.6" width="6" height="4.8" fill="#1e1e1e"/><rect x="2.2" y="5" width="1.6" height="1.8" fill="#efeff2"/><path d="M1.3 4 V2.4 a1.7 1.7 0 0 1 3.4 0 V4" fill="none" stroke="#1e1e1e" stroke-width="1.1"/></svg>
<svg style="left:910px;top:141px;" width="7" height="4" viewBox="0 0 7 4"><path d="M0 0 H7 L3.5 3.5 Z" fill="#444"/></svg>
<div style="left:45px;top:151px;width:875px;height:2px;background:#007acc;"></div>
<div style="left:45px;top:153px;width:875px;height:21px;background:#fff;"></div>
<div style="left:45px;top:174px;width:876px;height:2px;background:#d6d9e8;"></div>
<div style="left:481px;top:154px;width:1px;height:19px;background:#cccedb;"></div>
<svg style="left:49px;top:157px;" width="15" height="14" viewBox="0 0 15 14"><path d="M4.2 0.3 L8.4 4.5 L4.2 8.7 L0 4.5 Z" fill="#c27d1a"/><path d="M6 6.5 V11 H9.5 M6.5 6.5 H9.5" stroke="#c27d1a" stroke-width="1.2" fill="none"/><path d="M11.3 4 L13.8 6.5 L11.3 9 L8.8 6.5 Z M11.3 8.6 L13.8 11.1 L11.3 13.6 L8.8 11.1 Z" fill="#c27d1a"/></svg>
<span id="t32" class="u" style="left:65.59px;top:154.5px;height:18px;line-height:18px;font-size:13px;color:#1e1e1e;letter-spacing:-0.05px">Xenon.KifuLarabe.Program</span>
<svg style="left:472.5px;top:163px;" width="7" height="4" viewBox="0 0 7 4"><path d="M0 0 H7 L3.5 3.5 Z" fill="#444"/></svg>
<svg style="left:487px;top:158px;" width="10" height="11" viewBox="0 0 10 11"><path d="M5 0.6 L9.4 3 V8 L5 10.4 L0.6 8 V3 Z M0.6 3 L5 5.4 L9.4 3 M5 5.4 V10.4" fill="none" stroke="#68217a" stroke-width="1.2"/></svg>
<span id="t33" class="u" style="left:503px;top:154.5px;height:18px;line-height:18px;font-size:13px;color:#1e1e1e;letter-spacing:0.31px">Main(string[] args)</span>
<svg style="left:911.5px;top:163px;" width="7" height="4" viewBox="0 0 7 4"><path d="M0 0 H7 L3.5 3.5 Z" fill="#444"/></svg>
<div style="left:46px;top:176px;width:858px;height:549px;background:#fff;"></div>
<div style="left:45px;top:176px;width:17px;height:549px;background:#e6e7e8;"></div>
<div style="left:65px;top:300px;width:5px;height:252px;background:#6ce26c;"></div>
<div style="left:77px;top:176px;width:1px;height:549px;background:#a5a5a5;"></div>
<div style="left:81px;top:524px;width:822px;height:11px;border:2px solid #eaeaf2"></div>
<div style="left:77px;top:537px;width:5px;height:1px;background:#a5a5a5;"></div>
<svg style="left:72px;top:191px;" width="9" height="9" viewBox="0 0 9 9"><rect x="0.5" y="0.5" width="8" height="8" fill="#e8e8e8" stroke="#999"/><path d="M2 4.5 H7 M4.5 2 V7" stroke="#555" stroke-width="1"/></svg>
<svg style="left:72px;top:233px;" width="9" height="9" viewBox="0 0 9 9"><rect x="0.5" y="0.5" width="8" height="8" fill="#e8e8e8" stroke="#999"/><path d="M2 4.5 H7 M4.5 2 V7" stroke="#555" stroke-width="1"/></svg>
<svg style="left:72px;top:261px;" width="9" height="9" viewBox="0 0 9 9"><rect x="0.5" y="0.5" width="8" height="8" fill="#e8e8e8" stroke="#999"/><path d="M2 4.5 H7 M4.5 2 V7" stroke="#555" stroke-width="1"/></svg>
<svg style="left:72px;top:303px;" width="9" height="9" viewBox="0 0 9 9"><rect x="0.5" y="0.5" width="8" height="8" fill="#e8e8e8" stroke="#999"/><path d="M2 4.5 H7 M4.5 2 V7" stroke="#555" stroke-width="1"/></svg>
<svg style="left:72px;top:331px;" width="9" height="9" viewBox="0 0 9 9"><rect x="0.5" y="0.5" width="8" height="8" fill="#e8e8e8" stroke="#999"/><path d="M2 4.5 H7 M4.5 2 V7" stroke="#555" stroke-width="1"/></svg>
<svg style="left:72px;top:359px;" width="9" height="9" viewBox="0 0 9 9"><rect x="0.5" y="0.5" width="8" height="8" fill="#e8e8e8" stroke="#999"/><path d="M2 4.5 H7" stroke="#555" stroke-width="1"/></svg>
<div style="left:167px;top:188px;width:49px;height:13px;border:1px solid #808080"></div>
<span class="c" style="left:167px;top:188px;color:#808080">#region</span>
<div style="left:167px;top:230px;width:63px;height:13px;border:1px solid #808080"></div>
<span class="c" style="left:167px;top:230px;color:#808080">マイナス1</span>
<div style="left:167px;top:258px;width:63px;height:13px;border:1px solid #808080"></div>
<span class="c" style="left:167px;top:258px;color:#808080">マイナス2</span>
<div style="left:167px;top:300px;width:42px;height:13px;border:1px solid #808080"></div>
<span class="c" style="left:167px;top:300px;color:#808080">マージ</span>
<div style="left:167px;top:328px;width:217px;height:13px;border:1px solid #808080"></div>
<span class="c" style="left:167px;top:328px;color:#808080">masus_DirectedSegment＜その１＞</span>
<span class="c" style="left:166px;top:356px"><i class="k">#region</i> masus_DirectedSegment＜その２＞</span>
<span class="c" style="left:166px;top:370px"><i class="k">if</i> (<i class="k">true</i>)</span>
<span class="c" style="left:166px;top:384px">{</span>
<span class="c" style="left:194px;top:398px"><i class="t">Masus_Set</i> masus_Set = <i class="k">new</i> <i class="t">Masus_Set</i>();</span>
<span class="c" style="left:194px;top:426px"><i class="g">// さっきと違うのは、袋を被せて、袋の上から切っていることだぜ☆</i></span>
<span class="c" style="left:194px;top:440px">masus_Set.AddSupersets(<i class="k">new</i> <i class="t">Masus_DirectedSegment</i>(<i class="t">M201</i>.n83_８三, <i class="t">Sengo</i>.Gote, <i class="t">Muki</i>.上, 8));</span>
<span class="c" style="left:194px;top:454px">masus_Set.RemoveElement(<i class="t">M201</i>.n83_８三);</span>
<span class="c" style="left:194px;top:482px"><i class="g">// ぶっつり切れて　０マス　にならないといけないぜ☆？</i></span>
<span class="c" style="left:194px;top:496px">System.<i class="t">Console</i>.WriteLine(<i class="s"><b class="q">”</b>①masus_Set＝<b class="q">”</b></i> + masus_Set.LogString_Concrete());</span>
<span class="c" style="left:166px;top:510px">}</span>
<span class="c" style="left:166px;top:524px"><i class="k">#endregion</i></span>
<span class="c" style="left:166px;top:552px">System.<i class="t">Console</i>.ReadKey();</span>
<span class="c" style="left:166px;top:580px"><i class="g">////------------------------------------------------------------</i></span>
<span class="c" style="left:166px;top:594px"><i class="g">//// てきとうに４０手進めるぜ☆</i></span>
<span class="c" style="left:166px;top:608px"><i class="g">////------------------------------------------------------------</i></span>
<span class="c" style="left:166px;top:622px"><i class="g">//{</i></span>
<span class="c" style="left:166px;top:636px"><i class="g">//    foreach (Koma40 koma in Koma40Array.Items)</i></span>
<span class="c" style="left:166px;top:650px"><i class="g">//    {</i></span>
<span class="c" style="left:166px;top:664px"><i class="g">//        int banchi = 0;</i></span>
<span class="c" style="left:166px;top:692px"><i class="g">//        System.Console.WriteLine(banchi);</i></span>
<span class="c" style="left:166px;top:706px"><i class="g">//    }</i></span>
<div style="left:166px;top:720px;width:60px;height:5px;overflow:hidden"><span class="c" style="left:0;top:0"><i class="g">//}</i></span></div>
<div style="left:904px;top:176px;width:17px;height:549px;background:#e8e8ec;"></div>
<div style="left:904px;top:176px;width:17px;height:16px;background:#efeff2;"></div>
<div style="left:904px;top:192px;width:17px;height:1px;background:#d4d6e2;"></div>
<svg style="left:907px;top:178px;" width="11" height="13" viewBox="0 0 11 13"><path d="M0 5 H11 M0 7.5 H11" stroke="#1e1e1e" stroke-width="1"/><path d="M5.5 0 L8.5 3 H2.5 Z M5.5 12 L8.5 9.5 H2.5 Z" fill="#1e1e1e"/><path d="M5.5 2 V10" stroke="#1e1e1e"/></svg>
<svg style="left:908px;top:199px;" width="9" height="5" viewBox="0 0 9 5"><path d="M4.5 0 L9 5 H0 Z" fill="#868999"/></svg>
<div style="left:908px;top:499px;width:9px;height:40px;background:#c2c3c9;"></div>
<div style="left:46px;top:725px;width:874px;height:17px;background:#e8e8ec;"></div>
<div style="left:46px;top:725px;width:58px;height:17px;background:#fff;"></div>
<span id="t34" class="u" style="left:47.77px;top:726px;height:16px;line-height:16px;font-size:12px;color:#1e1e1e;letter-spacing:-0.34px">100 %</span>
<svg style="left:95px;top:732px;" width="7" height="4" viewBox="0 0 7 4"><path d="M0 0 H7 L3.5 3.5 Z" fill="#444"/></svg>
<svg style="left:112px;top:730px;" width="5" height="8" viewBox="0 0 5 8"><path d="M5 0 V8 L0 4 Z" fill="#868999"/></svg>
<div style="left:122px;top:729px;width:700px;height:9px;background:#cbccd4;"></div>
<div style="left:46px;top:742px;width:874px;height:6px;background:#d0d3e3;"></div>
<span id="t35" class="u" style="left:48px;top:750.5px;height:18px;line-height:18px;font-size:12.5px;color:#1e1e1e;letter-spacing:-0.27px">呼び出し履歴</span>
<svg style="left:128px;top:757px;" width="790" height="5" viewBox="0 0 790 5"><rect width="790" height="5" fill="url(#gp)"/></svg>
<div style="left:46px;top:771px;width:874px;height:174px;background:#f5f5f5;"></div>
<div style="left:46px;top:771px;width:874px;height:23px;background:#f0f0f3;"></div>
<div style="left:46px;top:794px;width:874px;height:1px;background:#dcdce4;"></div>
<div style="left:61px;top:772px;width:1px;height:22px;background:#dcdce4;"></div>
<span id="t36" class="u" style="left:65.77px;top:773.5px;height:18px;line-height:18px;font-size:12.5px;color:#a0a0a0;letter-spacing:-0.25px">名前</span>
<span id="t37" class="u" style="left:48.55px;top:947.5px;height:18px;line-height:18px;font-size:12.5px;color:#1e1e1e;letter-spacing:-0.14px">エラー一覧</span>
<span id="t38" class="u" style="left:118.6px;top:947.5px;height:18px;line-height:18px;font-size:12.5px;color:#1e1e1e;letter-spacing:0.92px">出力</span>
<span id="t39" class="u" style="left:152.39px;top:947.5px;height:18px;line-height:18px;font-size:12.5px;color:#1e1e1e;letter-spacing:-0.33px">シンボルの検索結果</span>
<span id="t40" class="u" style="left:271px;top:947.5px;height:18px;line-height:18px;font-size:12.5px;color:#1e1e1e;letter-spacing:0.13px">ブレークポイント</span>
<div style="left:114px;top:947px;width:1px;height:20px;background:#cccedb;"></div>
<div style="left:148px;top:947px;width:1px;height:20px;background:#cccedb;"></div>
<div style="left:266px;top:947px;width:1px;height:20px;background:#cccedb;"></div>
<div style="left:376px;top:947px;width:1px;height:20px;background:#cccedb;"></div>
<div style="left:12px;top:974px;width:1260px;height:26px;background:#ca5100;"></div>
<span id="t41" class="u" style="left:15.73px;top:977px;height:18px;line-height:18px;font-size:12.5px;color:#fff;letter-spacing:-0.17px">準備完了</span>
<span id="t42" class="u" style="left:992.42px;top:977.5px;height:18px;line-height:18px;font-size:12.5px;color:#fff;letter-spacing:0.31px">23 列</span>
<span id="t43" class="u" style="left:1083.86px;top:977.5px;height:18px;line-height:18px;font-size:12.5px;color:#fff;letter-spacing:0.10px">23 文字</span>
<span id="t44" class="u" style="left:1219.56px;top:977.5px;height:18px;line-height:18px;font-size:12.5px;color:#fff;letter-spacing:-0.46px">挿入</span>
<div style="left:1260px;top:988px;width:8px;height:8px;background-image:radial-gradient(circle,#e8a070 0.8px,transparent 1px);background-size:3px 3px;clip-path:polygon(100% 0,100% 100%,0 100%)"></div>
<span id="t45" class="u" style="left:929.74px;top:132px;height:18px;line-height:18px;font-size:12.5px;color:#1e1e1e;letter-spacing:-0.33px">ソリューション エクスプローラー</span>
<svg style="left:1123px;top:138px;" width="79" height="5" viewBox="0 0 79 5"><rect width="79" height="5" fill="url(#gp)"/></svg>
<svg style="left:1210.5px;top:140px;" width="9" height="5.0" viewBox="0 0 9 5.0"><path d="M0 0 H9 L4.5 4.5 Z" fill="#1e1e1e"/></svg>
<svg style="left:1229px;top:134.5px;" width="9" height="12" viewBox="0 0 9 12"><path d="M2.5 0.5 H6.5 M3 0.5 V6.5 M6 0.5 V6.5 M5 1 V6 M0.5 6.5 H8.5 M4.5 6.5 V11.5" stroke="#1e1e1e" stroke-width="1.1" fill="none"/></svg>
<svg style="left:1248px;top:136px;" width="10" height="10" viewBox="0 0 10 10"><path d="M1 1 L9 9 M9 1 L1 9" stroke="#1e1e1e" stroke-width="1.6"/></svg>
<svg style="left:935px;top:160px;" width="14" height="14" viewBox="0 0 14 14"><circle cx="7" cy="7" r="5.6" fill="#b8babf"/><path d="M10 7 H4.5 M6.8 4.6 L4.3 7 L6.8 9.4" stroke="#efeff2" stroke-width="1.5" fill="none"/></svg>
<svg style="left:957px;top:160px;" width="14" height="14" viewBox="0 0 14 14"><circle cx="7" cy="7" r="5.6" fill="#b8babf"/><path d="M4 7 H9.5 M7.2 4.6 L9.7 7 L7.2 9.4" stroke="#efeff2" stroke-width="1.5" fill="none"/></svg>
<svg style="left:978px;top:159px;" width="16" height="15" viewBox="0 0 16 15"><path d="M8 1.5 L1 8.5 H3.2 V14 H12.8 V8.5 H15 Z" fill="none" stroke="#1e1e1e" stroke-width="1.3"/><path d="M4.5 9 H11.5 V13.5 H4.5 Z" fill="#1e1e1e"/><rect x="7" y="10" width="2.4" height="3.6" fill="#efeff2"/><path d="M11.5 2 V5" stroke="#1e1e1e" stroke-width="1.6"/></svg>
<div style="left:1001px;top:157px;width:1px;height:21px;background:#cccedb;"></div>
<svg style="left:1010px;top:159px;" width="15" height="15" viewBox="0 0 15 15"><circle cx="8.5" cy="8.5" r="4.6" fill="none" stroke="#1e1e1e" stroke-width="1.8"/><path d="M8.5 6 V9 H10.5" stroke="#1e1e1e" stroke-width="1.2" fill="none"/><path d="M0.5 1.5 H5 M3 1.5 L4.5 4" stroke="#1e1e1e" stroke-width="1.4"/></svg>
<svg style="left:1030.0px;top:167px;" width="7" height="4.0" viewBox="0 0 7 4.0"><path d="M0 0 H7 L3.5 3.5 Z" fill="#555"/></svg>
<svg style="left:1044px;top:161px;" width="14" height="12" viewBox="0 0 14 12"><path d="M3 3.5 H13 M10 0.8 L13 3.5 L10 6.2 M11 8.5 H1 M4 5.8 L1 8.5 L4 11.2" stroke="#1e1e1e" stroke-width="1.7" fill="none"/></svg>
<svg style="left:1066px;top:160px;" width="13" height="14" viewBox="0 0 13 14"><path d="M2 8 V5 A3 3 0 0 1 8 4 M11 6 V9 A3 3 0 0 1 5 10" stroke="#b8babf" stroke-width="2" fill="none"/><path d="M5.5 1.5 L9.5 4.5 L5.5 6.5 Z M7.5 12.5 L3.5 9.5 L7.5 7.5 Z" fill="#b8babf"/></svg>
<svg style="left:1088px;top:160px;" width="14" height="14" viewBox="0 0 14 14"><rect x="1" y="5" width="8" height="7" fill="none" stroke="#1e1e1e" stroke-width="1.6"/><path d="M3.5 3 H11.5 V10 M6 0.8 H13.5 V8" fill="none" stroke="#1e1e1e" stroke-width="1.3"/><path d="M3 8.5 H7" stroke="#1e1e1e" stroke-width="1.3"/></svg>
<svg style="left:1110px;top:159px;" width="15" height="16" viewBox="0 0 15 16"><path d="M5.5 4.5 H10.5 L13.5 7.5 V15 H5.5 Z M7.5 8.5 H11.5 M7.5 10.5 H11.5 M7.5 12.5 H11.5" fill="none" stroke="#1e1e1e" stroke-width="1.1"/><path d="M0.5 1 H9 M0.5 1 V12" stroke="#1e1e1e" stroke-width="1" stroke-dasharray="1 1.2"/></svg>
<div style="left:1131px;top:157px;width:1px;height:21px;background:#cccedb;"></div>
<svg style="left:1140px;top:163px;" width="13" height="8" viewBox="0 0 13 8"><path d="M4.5 0.8 L1 4 L4.5 7.2 M8.5 0.8 L12 4 L8.5 7.2" stroke="#1e1e1e" stroke-width="1.5" fill="none"/></svg>
<svg style="left:1162px;top:160px;" width="14" height="14" viewBox="0 0 14 14"><path d="M1.5 12.5 L7 7" stroke="#1e1e1e" stroke-width="3" stroke-linecap="round"/><path d="M9.5 1 A4 4 0 1 0 13 5 L10.5 6.5 L8 4.5 Z" fill="#1e1e1e"/></svg>
<div style="left:1180px;top:155px;width:20px;height:22px;border:1px solid #3399ff;background:#f4f6fa"></div>
<svg style="left:1183px;top:159px;" width="16" height="16" viewBox="0 0 16 16"><path d="M1.5 3 H6 L7 1.5 H14.5 V12 H6" fill="none" stroke="#1e1e1e" stroke-width="1.3"/><circle cx="5" cy="9.5" r="2.8" fill="#f3f9ff" stroke="#0e70c0" stroke-width="1.5"/><path d="M3 11.8 L0.8 14.5" stroke="#0e70c0" stroke-width="1.7"/></svg>
<div style="left:927px;top:181px;width:339px;height:24px;background:#fff;"></div>
<span id="t46" class="u" style="left:931.18px;top:184.5px;height:18px;line-height:18px;font-size:12.5px;color:#6d6d6d;letter-spacing:-0.32px">ソリューション エクスプローラー</span>
<span id="t47" class="u" style="left:1118.65px;top:184.5px;height:18px;line-height:18px;font-size:12.5px;color:#6d6d6d;letter-spacing:0.77px">の検索 (Ctrl+:)</span>
<svg style="left:1238px;top:186px;" width="14" height="14" viewBox="0 0 14 14"><circle cx="8.5" cy="5" r="3.3" fill="none" stroke="#555" stroke-width="1.8"/><path d="M6 7.5 L1.5 12" stroke="#555" stroke-width="2.4" stroke-linecap="round"/></svg>
<svg style="left:1255.5px;top:192px;" width="7" height="4.0" viewBox="0 0 7 4.0"><path d="M0 0 H7 L3.5 3.5 Z" fill="#555"/></svg>
<div style="left:927px;top:206px;width:339px;height:323px;background:#f6f6f6;"></div>
<div style="left:1249px;top:206px;width:17px;height:323px;background:#e8e8ec;"></div>
<svg style="left:1252px;top:214px;" width="11" height="7" viewBox="0 0 11 7"><path d="M5.5 0 L11 6.5 H0 Z" fill="#868999"/></svg>
<svg style="left:1252px;top:517px;" width="11" height="7" viewBox="0 0 11 7"><path d="M5.5 6.5 L11 0 H0 Z" fill="#868999"/></svg>
<div style="left:1253px;top:238px;width:9px;height:103px;background:#c2c3c9;"></div>
<svg style="left:954.5px;top:216.5px;" width="7" height="7" viewBox="0 0 7 7"><path d="M7 0 V7 H0 Z" fill="#1e1e1e"/></svg>
<svg style="left:975.5px;top:213.0px;" width="14" height="13" viewBox="0 0 14 13"><path d="M3 6 V2.8 H8.3 L9.5 0.5 H13.5 V12.5 H12" fill="none" stroke="#383838" stroke-width="1"/><path d="M10 2 H12.4" stroke="#383838" stroke-width=".8"/><path d="M0 5.8 H10.6 L12.4 12.8 H1.7 Z" fill="#383838"/></svg>
<span id="t48" class="u" style="left:995px;top:210.5px;height:18px;line-height:18px;font-size:12.5px;color:#1e1e1e;letter-spacing:0.38px">Properties</span>
<svg style="left:973.5px;top:234.5px;" width="6" height="10" viewBox="0 0 6 10"><path d="M0.6 0.9 L4.6 5 L0.6 9.1 Z" fill="none" stroke="#1e1e1e" stroke-width="1.1"/></svg>
<span class="u" style="left:996.0px;top:232.5px;height:14px;line-height:14px;font-size:9.2px;font-weight:700;color:#388a34;letter-spacing:-0.4px;-webkit-text-stroke:0.3px #388a34">C#</span>
<span id="t49" class="u" style="left:1013.86px;top:230.5px;height:18px;line-height:18px;font-size:12.5px;color:#1e1e1e;letter-spacing:0.33px">AssemblyInfo.cs</span>
<svg style="left:955.5px;top:254.5px;" width="6" height="10" viewBox="0 0 6 10"><path d="M0.6 0.9 L4.6 5 L0.6 9.1 Z" fill="none" stroke="#1e1e1e" stroke-width="1.1"/></svg>
<div style="left:977px;top:257.5px;width:4px;height:4px;background:#1e1e1e;"></div>
<div style="left:982px;top:258.5px;width:2px;height:2px;background:#1e1e1e;"></div>
<div style="left:985px;top:256.5px;width:6px;height:6px;background:#1e1e1e;"></div>
<span id="t50" class="u" style="left:995.15px;top:250.5px;height:18px;line-height:18px;font-size:12.5px;color:#1e1e1e;letter-spacing:-0.10px">参照設定</span>
<svg style="left:954.5px;top:276.5px;" width="7" height="7" viewBox="0 0 7 7"><path d="M7 0 V7 H0 Z" fill="#1e1e1e"/></svg>
<svg style="left:975.5px;top:273.0px;" width="14" height="13" viewBox="0 0 14 13"><path d="M3 6 V2.8 H8.3 L9.5 0.5 H13.5 V12.5 H12" fill="none" stroke="#383838" stroke-width="1"/><path d="M10 2 H12.4" stroke="#383838" stroke-width=".8"/><path d="M0 5.8 H10.6 L12.4 12.8 H1.7 Z" fill="#383838"/></svg>
<span id="t51" class="u" style="left:995.32px;top:270.5px;height:18px;line-height:18px;font-size:12.5px;color:#1e1e1e;letter-spacing:0.38px">CSharp_Impl</span>
<svg style="left:973.5px;top:294.5px;" width="6" height="10" viewBox="0 0 6 10"><path d="M0.6 0.9 L4.6 5 L0.6 9.1 Z" fill="none" stroke="#1e1e1e" stroke-width="1.1"/></svg>
<svg style="left:993.5px;top:293.0px;" width="14" height="13" viewBox="0 0 14 13"><path d="M0 3 H7.6 L9 0.4 H14 V13 H0 Z" fill="#383838"/><path d="M9.8 2 H12.6" stroke="#f6f6f6" stroke-width=".9"/><path d="M8.2 3.9 H14" stroke="#f6f6f6" stroke-width=".7"/></svg>
<span id="t52" class="u" style="left:1013.59px;top:290.5px;height:18px;line-height:18px;font-size:12.5px;color:#1e1e1e;letter-spacing:0.15px">01_Log</span>
<svg style="left:973.5px;top:314.5px;" width="6" height="10" viewBox="0 0 6 10"><path d="M0.6 0.9 L4.6 5 L0.6 9.1 Z" fill="none" stroke="#1e1e1e" stroke-width="1.1"/></svg>
<svg style="left:993.5px;top:313.0px;" width="14" height="13" viewBox="0 0 14 13"><path d="M0 3 H7.6 L9 0.4 H14 V13 H0 Z" fill="#383838"/><path d="M9.8 2 H12.6" stroke="#f6f6f6" stroke-width=".9"/><path d="M8.2 3.9 H14" stroke="#f6f6f6" stroke-width=".7"/></svg>
<span id="t53" class="u" style="left:1013.59px;top:310.5px;height:18px;line-height:18px;font-size:12.5px;color:#1e1e1e;letter-spacing:0.36px">03_Communication</span>
<svg style="left:972.5px;top:336.5px;" width="7" height="7" viewBox="0 0 7 7"><path d="M7 0 V7 H0 Z" fill="#1e1e1e"/></svg>
<svg style="left:993.5px;top:333.0px;" width="14" height="13" viewBox="0 0 14 13"><path d="M3 6 V2.8 H8.3 L9.5 0.5 H13.5 V12.5 H12" fill="none" stroke="#383838" stroke-width="1"/><path d="M10 2 H12.4" stroke="#383838" stroke-width=".8"/><path d="M0 5.8 H10.6 L12.4 12.8 H1.7 Z" fill="#383838"/></svg>
<span id="t54" class="u" style="left:1013.59px;top:330.5px;height:18px;line-height:18px;font-size:12.5px;color:#1e1e1e;letter-spacing:0.45px">04_Common</span>
<svg style="left:990.5px;top:356.5px;" width="7" height="7" viewBox="0 0 7 7"><path d="M7 0 V7 H0 Z" fill="#1e1e1e"/></svg>
<svg style="left:1011.5px;top:353.0px;" width="14" height="13" viewBox="0 0 14 13"><path d="M3 6 V2.8 H8.3 L9.5 0.5 H13.5 V12.5 H12" fill="none" stroke="#383838" stroke-width="1"/><path d="M10 2 H12.4" stroke="#383838" stroke-width=".8"/><path d="M0 5.8 H10.6 L12.4 12.8 H1.7 Z" fill="#383838"/></svg>
<span id="t55" class="u" style="left:1031px;top:350.5px;height:18px;line-height:18px;font-size:12.5px;color:#1e1e1e;letter-spacing:-0.35px">Fp_強制転成</span>
<svg style="left:1009.5px;top:374.5px;" width="6" height="10" viewBox="0 0 6 10"><path d="M0.6 0.9 L4.6 5 L0.6 9.1 Z" fill="none" stroke="#1e1e1e" stroke-width="1.1"/></svg>
<span class="u" style="left:1032.0px;top:372.5px;height:14px;line-height:14px;font-size:9.2px;font-weight:700;color:#388a34;letter-spacing:-0.4px;-webkit-text-stroke:0.3px #388a34">C#</span>
<span id="t56" class="u" style="left:1049px;top:370.5px;height:18px;line-height:18px;font-size:12.5px;color:#1e1e1e;letter-spacing:0.28px">ForcePromotionArray.cs</span>
<svg style="left:1009.5px;top:394.5px;" width="6" height="10" viewBox="0 0 6 10"><path d="M0.6 0.9 L4.6 5 L0.6 9.1 Z" fill="none" stroke="#1e1e1e" stroke-width="1.1"/></svg>
<span class="u" style="left:1032.0px;top:392.5px;height:14px;line-height:14px;font-size:9.2px;font-weight:700;color:#388a34;letter-spacing:-0.4px;-webkit-text-stroke:0.3px #388a34">C#</span>
<span id="t57" class="u" style="left:1049px;top:390.5px;height:18px;line-height:18px;font-size:12.5px;color:#1e1e1e;letter-spacing:0.29px">ForcePromotionUtil.cs</span>
<svg style="left:991.5px;top:414.5px;" width="6" height="10" viewBox="0 0 6 10"><path d="M0.6 0.9 L4.6 5 L0.6 9.1 Z" fill="none" stroke="#1e1e1e" stroke-width="1.1"/></svg>
<svg style="left:1011.5px;top:413.0px;" width="14" height="13" viewBox="0 0 14 13"><path d="M0 3 H7.6 L9 0.4 H14 V13 H0 Z" fill="#383838"/><path d="M9.8 2 H12.6" stroke="#f6f6f6" stroke-width=".9"/><path d="M8.2 3.9 H14" stroke="#f6f6f6" stroke-width=".7"/></svg>
<span id="t58" class="u" style="left:1031px;top:410.5px;height:18px;line-height:18px;font-size:12.5px;color:#1e1e1e;letter-spacing:-0.32px">H_配役転換表</span>
<svg style="left:991.5px;top:434.5px;" width="6" height="10" viewBox="0 0 6 10"><path d="M0.6 0.9 L4.6 5 L0.6 9.1 Z" fill="none" stroke="#1e1e1e" stroke-width="1.1"/></svg>
<svg style="left:1011.5px;top:433.0px;" width="14" height="13" viewBox="0 0 14 13"><path d="M0 3 H7.6 L9 0.4 H14 V13 H0 Z" fill="#383838"/><path d="M9.8 2 H12.6" stroke="#f6f6f6" stroke-width=".9"/><path d="M8.2 3.9 H14" stroke="#f6f6f6" stroke-width=".7"/></svg>
<span id="t59" class="u" style="left:1031px;top:430.5px;height:18px;line-height:18px;font-size:12.5px;color:#1e1e1e;letter-spacing:-0.11px">Kf_棋譜_局面</span>
<svg style="left:991.5px;top:454.5px;" width="6" height="10" viewBox="0 0 6 10"><path d="M0.6 0.9 L4.6 5 L0.6 9.1 Z" fill="none" stroke="#1e1e1e" stroke-width="1.1"/></svg>
<svg style="left:1011.5px;top:453.0px;" width="14" height="13" viewBox="0 0 14 13"><path d="M0 3 H7.6 L9 0.4 H14 V13 H0 Z" fill="#383838"/><path d="M9.8 2 H12.6" stroke="#f6f6f6" stroke-width=".9"/><path d="M8.2 3.9 H14" stroke="#f6f6f6" stroke-width=".7"/></svg>
<span id="t60" class="u" style="left:1031px;top:450.5px;height:18px;line-height:18px;font-size:12.5px;color:#1e1e1e;letter-spacing:-0.13px">Kh_駒配役</span>
<svg style="left:991.5px;top:474.5px;" width="6" height="10" viewBox="0 0 6 10"><path d="M0.6 0.9 L4.6 5 L0.6 9.1 Z" fill="none" stroke="#1e1e1e" stroke-width="1.1"/></svg>
<svg style="left:1011.5px;top:473.0px;" width="14" height="13" viewBox="0 0 14 13"><path d="M0 3 H7.6 L9 0.4 H14 V13 H0 Z" fill="#383838"/><path d="M9.8 2 H12.6" stroke="#f6f6f6" stroke-width=".9"/><path d="M8.2 3.9 H14" stroke="#f6f6f6" stroke-width=".7"/></svg>
<span id="t61" class="u" style="left:1031px;top:470.5px;height:18px;line-height:18px;font-size:12.5px;color:#1e1e1e;letter-spacing:0.00px">Kk_駒軌道</span>
<svg style="left:991.5px;top:494.5px;" width="6" height="10" viewBox="0 0 6 10"><path d="M0.6 0.9 L4.6 5 L0.6 9.1 Z" fill="none" stroke="#1e1e1e" stroke-width="1.1"/></svg>
<svg style="left:1011.5px;top:493.0px;" width="14" height="13" viewBox="0 0 14 13"><path d="M0 3 H7.6 L9 0.4 H14 V13 H0 Z" fill="#383838"/><path d="M9.8 2 H12.6" stroke="#f6f6f6" stroke-width=".9"/><path d="M8.2 3.9 H14" stroke="#f6f6f6" stroke-width=".7"/></svg>
<span id="t62" class="u" style="left:1031px;top:490.5px;height:18px;line-height:18px;font-size:12.5px;color:#1e1e1e;letter-spacing:-0.23px">Ks_駒種類</span>
<svg style="left:991.5px;top:514.5px;" width="6" height="10" viewBox="0 0 6 10"><path d="M0.6 0.9 L4.6 5 L0.6 9.1 Z" fill="none" stroke="#1e1e1e" stroke-width="1.1"/></svg>
<svg style="left:1011.5px;top:513.0px;" width="14" height="13" viewBox="0 0 14 13"><path d="M0 3 H7.6 L9 0.4 H14 V13 H0 Z" fill="#383838"/><path d="M9.8 2 H12.6" stroke="#f6f6f6" stroke-width=".9"/><path d="M8.2 3.9 H14" stroke="#f6f6f6" stroke-width=".7"/></svg>
<span id="t63" class="u" style="left:1031px;top:510.5px;height:18px;line-height:18px;font-size:12.5px;color:#1e1e1e;letter-spacing:-0.33px">M_マス番号</span>
<div style="left:926px;top:530px;width:340px;height:6px;background:#d0d3e3;"></div>
<svg style="left:998px;top:545px;" width="204" height="5" viewBox="0 0 204 5"><rect width="204" height="5" fill="url(#gp)"/></svg>
<svg style="left:1210.5px;top:547px;" width="9" height="5.0" viewBox="0 0 9 5.0"><path d="M0 0 H9 L4.5 4.5 Z" fill="#1e1e1e"/></svg>
<svg style="left:1229px;top:541px;" width="9" height="12" viewBox="0 0 9 12"><path d="M2.5 0.5 H6.5 M3 0.5 V6.5 M6 0.5 V6.5 M5 1 V6 M0.5 6.5 H8.5 M4.5 6.5 V11.5" stroke="#1e1e1e" stroke-width="1.1" fill="none"/></svg>
<svg style="left:1247px;top:543px;" width="10" height="10" viewBox="0 0 10 10"><path d="M1 1 L9 9 M9 1 L1 9" stroke="#1e1e1e" stroke-width="1.6"/></svg>
<div style="left:927px;top:560px;width:339px;height:27px;background:#fcfcfc;"></div>
<svg style="left:1255.5px;top:572.5px;" width="7" height="4.0" viewBox="0 0 7 4.0"><path d="M0 0 H7 L3.5 3.5 Z" fill="#555"/></svg>
<svg style="left:988px;top:592px;" width="13" height="13" viewBox="0 0 13 13"><path d="M1.5 11.5 L6.5 6.5" stroke="#b8babf" stroke-width="2.6" stroke-linecap="round"/><path d="M9 1 A3.6 3.6 0 1 0 12 4.5 L10 6 L7.5 4 Z" fill="#b8babf"/></svg>
<div style="left:927px;top:613px;width:339px;height:354px;background:#f5f5f5;"></div>
<div style="left:927px;top:945px;width:339px;height:1px;background:#ececf0;"></div>
<div style="left:1139px;top:993px;width:145px;height:26px;background:linear-gradient(#dfe4ec 0,#8a98ae 2px,#566680 6px,#26364e 13px,#1a2a44 100%);"></div>
<div style="left:1143px;top:998px;width:9px;height:18px;background-image:radial-gradient(circle,#0c1420 0.9px,transparent 1.1px);background-size:3px 3.6px"></div>
<svg style="left:1158px;top:997px;" width="18" height="20" viewBox="0 0 18 20"><circle cx="7" cy="8" r="6" fill="#e01818"/><circle cx="5" cy="6" r="2" fill="#ff7a7a"/><path d="M8 13 L13 16" stroke="#222" stroke-width="3"/><rect x="13" y="1" width="2.4" height="11" fill="#e8c070"/></svg>
<span class="c" style="left:1185px;top:998px;font-size:18px;line-height:18px;height:18px;color:#fff">A</span>
<span class="c" style="left:1196px;top:998px;font-size:18px;line-height:18px;height:18px;color:#fff">般</span>
<div style="left:1216px;top:996px;width:18px;height:20px;border:1px solid #7888a0;border-radius:2px;background:#2a3a58"></div>
<svg style="left:1218px;top:998px;" width="16" height="17" viewBox="0 0 16 17"><path d="M1 7 H15 L13 16 H3 Z" fill="#e8b860"/><ellipse cx="8" cy="7" rx="7" ry="2.5" fill="#f8e0a0"/><circle cx="12" cy="4" r="3" fill="#60a8e8"/><path d="M3 2 L8 7" stroke="#d03030" stroke-width="2"/></svg>
<svg style="left:1237px;top:999px;" width="17" height="16" viewBox="0 0 17 16"><path d="M1 7 L8 3 L16 6 V11 L8 15 L1 12 Z" fill="#e8b050"/><path d="M1 7 L8 10 L16 6 M8 10 V15" stroke="#b07820" fill="none"/><path d="M5 5 L12 8" stroke="#888" stroke-width="2"/></svg>
<svg style="left:1260px;top:999px;" width="16" height="16" viewBox="0 0 16 16"><circle cx="8" cy="8" r="7.2" fill="#1838c8" stroke="#a8b8e8" stroke-width="1.2"/></svg>
<span id="t64" class="u" style="left:1264px;top:999px;height:16px;line-height:16px;font-size:12px;color:#fff;font-weight:bold;">?</span>
<div style="left:1187px;top:1032px;width:8px;height:6px;background:#f0f0f0;"></div>
<div style="left:1210px;top:1032px;width:3px;height:6px;background:#f0f0f0;"></div>
<div style="left:1213px;top:1033px;width:8px;height:2px;background:#f0f0f0;"></div>
<div style="left:1232px;top:1033px;width:4px;height:5px;background:#f0f0f0;"></div>
<svg style="left:1236px;top:1030px;" width="6" height="8" viewBox="0 0 6 8"><path d="M6 0 V8 H0 Z" fill="#f0f0f0"/></svg>
<div style="left:314px;top:528px;width:675px;height:490px;border-radius:7px 7px 6px 6px;box-shadow:0 0 0 1px #222c38,0 0 4px 1px rgba(0,0,0,.5),0 4px 16px 4px rgba(0,0,0,.45);background:linear-gradient(#e6f0fb 0px,#d6e5f7 28px,#dae8f8 141px,#b2d2f4 143px,#acccf2 420px,#93aac8 424px,#93aac8 431px,#b0cbea 436px,#b4cce8 443px,#8c5c44 447px,#8a563a 470px,#3a90d0 474px,#3a90d0 490px)"></div>
<div style="left:315px;top:529px;width:673px;height:488px;border-radius:6px;border:1px solid rgba(255,255,255,.7);box-sizing:border-box"></div>
<div style="left:317px;top:1011px;width:669px;height:5px;background:linear-gradient(90deg,#3a94d4 0%,#3590d0 40%,#2a78c0 55%,#2468b0 100%);"></div>
<svg style="left:323px;top:536px;" width="15" height="13" viewBox="0 0 15 13"><rect x="0.5" y="0.5" width="14" height="12" fill="#fff" stroke="#8a8a8a"/><rect x="1" y="1" width="13" height="2.5" fill="#9ab"/><rect x="2" y="4.5" width="8" height="7" fill="#1a1a1a"/><rect x="11" y="4.5" width="2.5" height="7" fill="#bbb"/></svg>
<span id="t65" class="u" style="left:343.53px;top:533.5px;height:18px;line-height:18px;font-size:13px;color:#000;letter-spacing:0.31px">file:///C:/Users/Takahashi/Documents/Visual Studio 2012/Projects_Shogi/KifuLarabe/K...</span>
<div style="left:878px;top:528px;width:103px;height:19px;border:1px solid #5a6a80;border-top:none;border-radius:0 0 5px 5px;box-sizing:border-box;overflow:hidden;background:linear-gradient(#e8f0f8,#c8d8ec 45%,#aec4e0 50%,#c6d8ee)"><div style="left:55px;top:0;width:48px;height:19px;background:linear-gradient(#e8a090,#d4624c 45%,#c03a22 50%,#d86a4c)"></div><div style="left:27px;top:0;width:1px;height:19px;background:#5a6a80"></div><div style="left:54px;top:0;width:1px;height:19px;background:#5a6a80"></div></div>
<div style="left:887px;top:537px;width:10px;height:3px;border:1px solid #444;background:#fff"></div>
<div style="left:914px;top:532px;width:10px;height:8px;border:1px solid #444;background:#fff"></div><div style="left:917px;top:535px;width:4px;height:2px;border:1px solid #444;background:#c8d8ec"></div>
<svg style="left:951px;top:532px;" width="14" height="11" viewBox="0 0 14 11"><path d="M2 1.5 L12 9.5 M12 1.5 L2 9.5" stroke="#5a2a20" stroke-width="4"/><path d="M2 1.5 L12 9.5 M12 1.5 L2 9.5" stroke="#fff" stroke-width="2.2"/></svg>
<div style="left:322px;top:558px;width:658px;height:453px;background:#f4f8fc;box-shadow:0 0 0 1px rgba(90,110,140,.55)"></div>
<div style="left:323px;top:559px;width:640px;height:451px;background:#000;"></div>
<span class="c" style="left:323px;top:560px;font-size:16px;line-height:16px;height:16px;color:#c0c0c0">①masus_Set＝[]</span>
<div style="left:323px;top:590px;width:8px;height:5px;background:#c0c0c0;"></div>
<div style="left:963px;top:559px;width:17px;height:451px;background:#f0f0f0;"></div>
<svg style="left:968px;top:566px;" width="7" height="4" viewBox="0 0 7 4"><path d="M3.5 0 L7 4 H0 Z" fill="#444"/></svg>
<svg style="left:968px;top:999px;" width="7" height="4" viewBox="0 0 7 4"><path d="M3.5 4 L7 0 H0 Z" fill="#444"/></svg>
<div style="left:964px;top:577px;width:13px;height:31px;border:1px solid #8a8a8a;border-radius:2px;background:linear-gradient(90deg,#f6f6f6,#dcdcdc)"></div>
<div style="left:968px;top:589px;width:7px;height:1px;background:#666;"></div>
<div style="left:968px;top:592px;width:7px;height:1px;background:#666;"></div>
<div style="left:968px;top:595px;width:7px;height:1px;background:#666;"></div>
<div style="left:401.5px;top:533.5px;width:57px;height:57px;border:6.5px solid #ed1c24;border-radius:50%"></div>
<span class="c" style="left:425px;top:631px;font-size:32px;line-height:32px;height:32px;color:#ed1c24;-webkit-text-stroke:0.35px #ed1c24">合ってる☆ｗｗ</span>
<span class="c" style="left:425px;top:675px;font-size:32px;line-height:32px;height:32px;color:#ed1c24;-webkit-text-stroke:0.35px #ed1c24">０マス☆ｗｗｗｗ</span>
</div></body></html>
